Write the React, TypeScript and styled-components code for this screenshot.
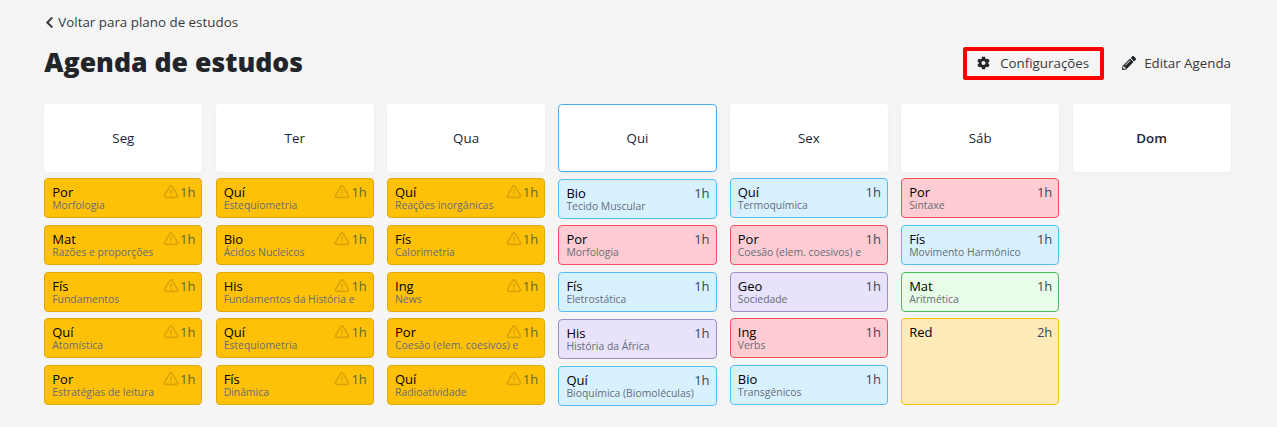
import React from 'react';
import styled, { createGlobalStyle } from 'styled-components';
import { FaChevronLeft, FaCog, FaPencilAlt } from 'react-icons/fa';
import { TbAlertTriangle } from 'react-icons/tb';

const GlobalStyle = createGlobalStyle`
  html, body {
    margin: 0;
    background: #f5f5f5;
    font-family: 'Open Sans', 'Liberation Sans', sans-serif;
    color: #212529;
  }
`;

const Page = styled.main`
  box-sizing: border-box;
  width: 1277px;
  height: 427px;
  padding: 13px 46px 0 44.25px;
  overflow: hidden;
`;

const BackLink = styled.a`
  display: flex;
  align-items: center;
  gap: 3px;
  height: 19px;
  font-size: 13.33px;
  line-height: 19px;
  letter-spacing: 0.02px;
  color: #343a40;
  > svg {
    width: 11px;
    height: 13px;
  }
`;

const TitleRow = styled.header`
  display: flex;
  align-items: center;
  justify-content: space-between;
  height: 33px;
  margin: 15px 0 24px;
`;

const Title = styled.h1`
  margin: 0 0 4px;
  font-size: 26.6px;
  line-height: 32px;
  font-weight: 800;
  color: #212529;
`;

const Actions = styled.div`
  display: flex;
  align-items: center;
  gap: 18px;
`;

const ActionButton = styled.button<{ $highlight?: boolean }>`
  box-sizing: border-box;
  display: flex;
  align-items: center;
  height: 33px;
  padding: ${p => (p.$highlight ? '0 11px 2px 10px' : '0 0 2px')};
  gap: ${p => (p.$highlight ? '10px' : '8px')};
  background: transparent;
  border: ${p => (p.$highlight ? '4px solid #fe0000' : '0')};
  border-radius: 2px;
  font-family: inherit;
  font-size: 13.33px;
  color: #343a40;
  > svg {
    width: ${p => (p.$highlight ? '13px' : '14px')};
    height: 14px;
    color: #212529;
  }
`;

const Week = styled.section`
  display: grid;
  grid-template-columns: repeat(7, 158.2px);
  column-gap: 13.2px;
`;

const Column = styled.div`
  display: flex;
  flex-direction: column;
  gap: 6.7px;
`;

const DayHeader = styled.div<{ $today?: boolean; $semi?: boolean }>`
  box-sizing: border-box;
  display: flex;
  align-items: center;
  justify-content: center;
  height: 68px;
  margin-bottom: ${p => (p.$today ? '0.1px' : '-0.4px')};
  background: #fff;
  border: 1px solid ${p => (p.$today ? '#4dabe8' : 'transparent')};
  border-radius: 4px;
  box-shadow: 0 2px 6px rgba(0, 0, 0, 0.03);
  font-size: 13.33px;
  font-weight: ${p => (p.$semi ? 600 : 500)};
  color: #16263a;
`;

type Tone = 'late' | 'blue' | 'red' | 'purple' | 'green' | 'sand';

const tones: Record<Tone, { bg: string; line: string }> = {
  late: { bg: '#ffc107', line: '#dfa80d' },
  blue: { bg: '#d8f1ff', line: '#55bdf5' },
  red: { bg: '#ffccd3', line: '#f5505f' },
  purple: { bg: '#e8e2fb', line: '#9f8cc9' },
  green: { bg: '#e8fde9', line: '#4cb85a' },
  sand: { bg: '#feebb8', line: '#ffc107' },
};

const Card = styled.article<{ $tone: Tone; $tall?: boolean }>`
  box-sizing: border-box;
  display: flex;
  flex-direction: column;
  height: ${p => (p.$tall ? '86.7px' : '40px')};
  padding: 5px 6px 0 7px;
  background: ${p => tones[p.$tone].bg};
  border: 1px solid ${p => tones[p.$tone].line};
  border-radius: 4px;
`;

const CardTop = styled.div`
  display: flex;
  align-items: center;
  justify-content: space-between;
  height: 16px;
`;

const Subject = styled.span`
  font-size: 13px;
  line-height: 16px;
  color: #000;
`;

const Hours = styled.span<{ $late?: boolean }>`
  display: flex;
  align-items: center;
  gap: 1px;
  font-size: 13px;
  line-height: 16px;
  color: ${p => (p.$late ? '#5d6b2e' : '#3a4654')};
  > svg {
    width: 16px;
    height: 16px;
    color: #d9a408;
    stroke-width: 2.4;
  }
`;

const Topic = styled.div`
  font-size: 10.4px;
  line-height: 11px;
  font-weight: 500;
  color: #666d78;
  white-space: nowrap;
`;

type Item = { subject: string; topic?: string; hours: string; tone: Tone; tall?: boolean };

const late = (subject: string, topic: string): Item => ({ subject, topic, hours: '1h', tone: 'late' });
const item = (subject: string, topic: string, tone: Tone): Item => ({ subject, topic, hours: '1h', tone });

const days: { name: string; today?: boolean; semi?: boolean; items: Item[] }[] = [
  {
    name: 'Seg',
    items: [
      late('Por', 'Morfologia'),
      late('Mat', 'Razões e proporções'),
      late('Fís', 'Fundamentos'),
      late('Quí', 'Atomística'),
      late('Por', 'Estratégias de leitura'),
    ],
  },
  {
    name: 'Ter',
    items: [
      late('Quí', 'Estequiometria'),
      late('Bio', 'Ácidos Nucleicos'),
      late('His', 'Fundamentos da História e'),
      late('Quí', 'Estequiometria'),
      late('Fís', 'Dinâmica'),
    ],
  },
  {
    name: 'Qua',
    items: [
      late('Quí', 'Reações inorgânicas'),
      late('Fís', 'Calorimetria'),
      late('Ing', 'News'),
      late('Por', 'Coesão (elem. coesivos) e'),
      late('Quí', 'Radioatividade'),
    ],
  },
  {
    name: 'Qui',
    today: true,
    items: [
      item('Bio', 'Tecido Muscular', 'blue'),
      item('Por', 'Morfologia', 'red'),
      item('Fís', 'Eletrostática', 'blue'),
      item('His', 'História da África', 'purple'),
      item('Quí', 'Bioquímica (Biomoléculas)', 'blue'),
    ],
  },
  {
    name: 'Sex',
    items: [
      item('Quí', 'Termoquímica', 'blue'),
      item('Por', 'Coesão (elem. coesivos) e', 'red'),
      item('Geo', 'Sociedade', 'purple'),
      item('Ing', 'Verbs', 'red'),
      item('Bio', 'Transgênicos', 'blue'),
    ],
  },
  {
    name: 'Sáb',
    items: [
      item('Por', 'Sintaxe', 'red'),
      item('Fís', 'Movimento Harmônico', 'blue'),
      item('Mat', 'Aritmética', 'green'),
      { subject: 'Red', hours: '2h', tone: 'sand', tall: true },
    ],
  },
  { name: 'Dom', semi: true, items: [] },
];

export default function App() {
  return (
    <Page>
      <GlobalStyle />
      <BackLink>
        <FaChevronLeft />
        Voltar para plano de estudos
      </BackLink>
      <TitleRow>
        <Title>Agenda de estudos</Title>
        <Actions>
          <ActionButton $highlight>
            <FaCog />
            Configurações
          </ActionButton>
          <ActionButton>
            <FaPencilAlt />
            Editar Agenda
          </ActionButton>
        </Actions>
      </TitleRow>
      <Week>
        {days.map(day => (
          <Column key={day.name}>
            <DayHeader $today={day.today} $semi={day.semi}>
              {day.name}
            </DayHeader>
            {day.items.map((it, i) => (
              <Card key={i} $tone={it.tone} $tall={it.tall}>
                <CardTop>
                  <Subject>{it.subject}</Subject>
                  <Hours $late={it.tone === 'late'}>
                    {it.tone === 'late' && <TbAlertTriangle />}
                    {it.hours}
                  </Hours>
                </CardTop>
                {it.topic && <Topic>{it.topic}</Topic>}
              </Card>
            ))}
          </Column>
        ))}
      </Week>
    </Page>
  );
}
